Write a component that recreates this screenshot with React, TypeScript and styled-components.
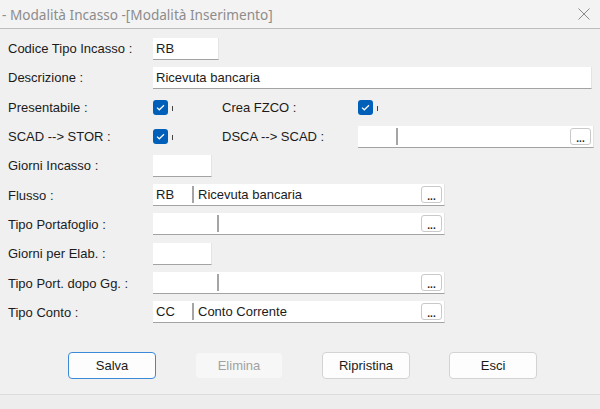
import React from "react";
import styled, { createGlobalStyle } from "styled-components";

const Global = createGlobalStyle`
  html, body {
    margin: 0;
    padding: 0;
    background: #f0f0f0;
  }
  body {
    font-family: "Liberation Sans", Arial, sans-serif;
  }
`;

const Window = styled.div`
  width: 600px;
  height: 409px;
  display: flex;
  flex-direction: column;
  background: #f0f0f0;
  overflow: hidden;
  color: #1b1b1b;
  font-size: 13px;
`;

const TitleBar = styled.div`
  height: 28px;
  flex: none;
  display: flex;
  align-items: center;
  justify-content: space-between;
  padding: 0 10px 0 2px;
  background: #f3f3f3;
  border-bottom: 1px solid #bdbdbd;
`;

const Title = styled.span`
  font-family: "Noto Sans", sans-serif;
  font-size: 13.6px;
  color: #8c8c8c;
`;

const Form = styled.div`
  padding: 5px 0 0 8px;
  display: flex;
  flex-direction: column;
`;

const Row = styled.div`
  height: 29.3px;
  display: flex;
  align-items: center;
`;

const Label = styled.div<{ $w: number }>`
  width: ${p => p.$w}px;
  flex: none;
  white-space: nowrap;
`;

const Field = styled.div<{ $w: number }>`
  width: ${p => p.$w}px;
  height: 22px;
  box-sizing: border-box;
  background: #fff;
  border-bottom: 1px solid #a3a3a3;
  border-right: 1px solid #e4e4e4;
  display: flex;
  align-items: center;
  padding-left: 3px;
  flex: none;
`;

const Part = styled.div<{ $w?: number }>`
  ${p => (p.$w ? `width: ${p.$w}px; flex: none;` : "flex: 1;")}
  height: 100%;
  display: flex;
  align-items: center;
  white-space: nowrap;
  overflow: hidden;
`;

const Divider = styled.div`
  width: 2px;
  height: 17px;
  background: #a5a5a5;
  margin: 0 4px 0 0;
  flex: none;
`;

const Dots = styled.button`
  width: 21px;
  height: 17px;
  margin-right: 2px;
  box-sizing: border-box;
  border: 1px solid #c9c9c9;
  border-radius: 3px;
  background: #fff;
  padding: 0;
  font: bold 10px "Liberation Sans", sans-serif;
  color: #222;
  line-height: 19px;
  flex: none;
`;

const CheckCell = styled.div`
  width: 69px;
  flex: none;
  display: flex;
  align-items: center;
`;

const Box = styled.div`
  width: 15px;
  height: 15px;
  border-radius: 3px;
  background: #005fb8;
  display: flex;
  align-items: center;
  justify-content: center;
`;

const Tick = styled.div`
  width: 1px;
  height: 5px;
  background: #444;
  margin: 2px 0 0 4px;
`;

const Buttons = styled.div`
  margin-top: 25px;
  padding-left: 68px;
  display: flex;
  gap: 39px;
`;

const Button = styled.button<{ $primary?: boolean }>`
  width: 88px;
  height: 27px;
  box-sizing: border-box;
  border-radius: 4px;
  background: ${p => (p.disabled ? "#f7f7f7" : "#fdfdfd")};
  border: 1px solid
    ${p => (p.$primary ? "#3b8ad8" : p.disabled ? "#f0f0f0" : "#d3d3d3")};
  color: ${p => (p.disabled ? "#a2a2a2" : "#1b1b1b")};
  font: 13px "Liberation Sans", Arial, sans-serif;
  padding: 0;
`;

const StatusBar = styled.div`
  margin-top: auto;
  height: 14px;
  border-top: 1px solid #dcdcdc;
  background: #ededed;
`;

function Check() {
  return (
    <CheckCell>
      <Box>
        <svg width="9" height="7" viewBox="0 0 9 7">
          <path d="M1 3.6 L3.3 5.8 L8 1.2" fill="none" stroke="#fff" strokeWidth="1.2" />
        </svg>
      </Box>
      <Tick />
    </CheckCell>
  );
}

function Lookup({ w, code, codeW, text }: { w: number; code?: string; codeW: number; text?: string }) {
  return (
    <Field $w={w}>
      <Part $w={codeW}>{code}</Part>
      <Divider />
      <Part>{text}</Part>
      <Dots>...</Dots>
    </Field>
  );
}

export default function App() {
  return (
    <Window>
      <Global />
      <TitleBar>
        <Title>- Modalità Incasso -[Modalità Inserimento]</Title>
        <svg width="12" height="12" viewBox="0 0 12 12">
          <path d="M0.5 0.5 L11.5 11.5 M11.5 0.5 L0.5 11.5" stroke="#8a8a8a" strokeWidth="1" />
        </svg>
      </TitleBar>
      <Form>
        <Row>
          <Label $w={145}>Codice Tipo Incasso :</Label>
          <Field $w={66}>RB</Field>
        </Row>
        <Row>
          <Label $w={145}>Descrizione :</Label>
          <Field $w={439}>Ricevuta bancaria</Field>
        </Row>
        <Row>
          <Label $w={145}>Presentabile :</Label>
          <Check />
          <Label $w={136}>Crea FZCO :</Label>
          <Check />
        </Row>
        <Row>
          <Label $w={145}>SCAD --&gt; STOR :</Label>
          <Check />
          <Label $w={136}>DSCA --&gt; SCAD :</Label>
          <Lookup w={236} codeW={35} />
        </Row>
        <Row>
          <Label $w={145}>Giorni Incasso :</Label>
          <Field $w={59} />
        </Row>
        <Row>
          <Label $w={145}>Flusso :</Label>
          <Lookup w={292} code="RB" codeW={36} text="Ricevuta bancaria" />
        </Row>
        <Row>
          <Label $w={145}>Tipo Portafoglio :</Label>
          <Lookup w={292} codeW={61} />
        </Row>
        <Row>
          <Label $w={145}>Giorni per Elab. :</Label>
          <Field $w={59} />
        </Row>
        <Row>
          <Label $w={145}>Tipo Port. dopo Gg. :</Label>
          <Lookup w={292} codeW={61} />
        </Row>
        <Row>
          <Label $w={145}>Tipo Conto :</Label>
          <Lookup w={292} code="CC" codeW={36} text="Conto Corrente" />
        </Row>
      </Form>
      <Buttons>
        <Button $primary>Salva</Button>
        <Button disabled>Elimina</Button>
        <Button>Ripristina</Button>
        <Button>Esci</Button>
      </Buttons>
      <StatusBar />
    </Window>
  );
}
